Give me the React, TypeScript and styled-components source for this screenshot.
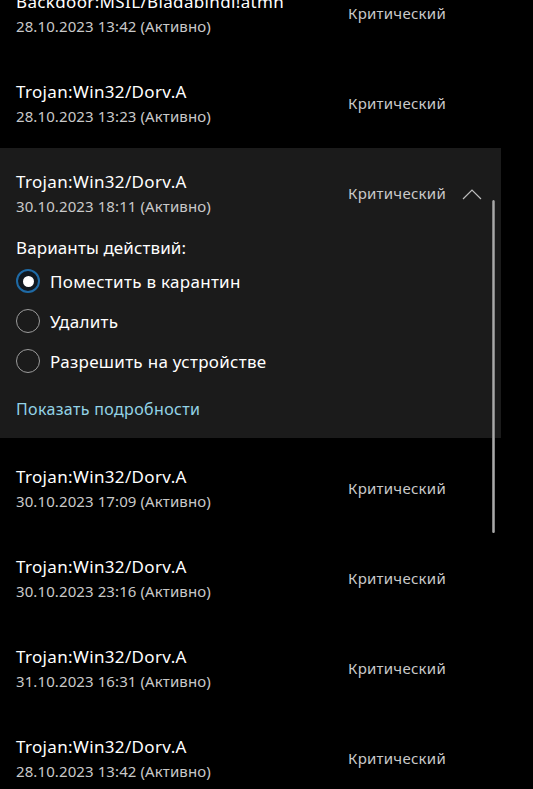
import React from "react";
import styled, { createGlobalStyle } from "styled-components";

const Global = createGlobalStyle`
  html, body { margin: 0; padding: 0; background: #000; }
  body { font-family: "Noto Sans", "Open Sans", sans-serif; overflow: hidden; }
`;

const Page = styled.div`
  position: relative;
  width: 533px;
  height: 789px;
  overflow: hidden;
  background: #000;
`;

const List = styled.div`
  display: flex;
  flex-direction: column;
  margin-top: -32px;
  width: 501px;
`;

const Row = styled.div`
  display: grid;
  grid-template-columns: 332px 114px 20px;
  align-items: center;
  height: 90px;
  padding-left: 16px;
  box-sizing: border-box;
`;

const Info = styled.div`
  display: flex;
  flex-direction: column;
`;

const Title = styled.div`
  color: #fff;
  font-size: 17px;
  line-height: 22px;
  letter-spacing: 0.35px;
  white-space: nowrap;
`;

const DateLine = styled.div`
  color: #c9c9c9;
  font-size: 15px;
  line-height: 20px;
  margin-top: 3px;
  letter-spacing: 0.1px;
  white-space: nowrap;
`;

const Severity = styled.div`
  color: #c9c9c9;
  font-size: 15px;
  line-height: 20px;
  letter-spacing: 0.25px;
  white-space: nowrap;
`;

const Panel = styled.div`
  background: #1b1b1b;
  margin-bottom: 5px;
`;

const Body = styled.div`
  padding: 0 16px 18px;
  display: flex;
  flex-direction: column;
`;

const Label = styled.div`
  color: #fff;
  font-size: 17px;
  line-height: 22px;
  margin-top: -1px;
  letter-spacing: 0.1px;
`;

const Options = styled.div`
  display: flex;
  flex-direction: column;
  margin-top: 2px;
`;

const OptionRow = styled.div`
  display: flex;
  align-items: center;
  height: 40px;
  gap: 10px;
  color: #fff;
  font-size: 17px;
  letter-spacing: 0.3px;
`;

const Radio = styled.span<{ $checked?: boolean }>`
  box-sizing: border-box;
  width: 24px;
  height: 24px;
  border-radius: 50%;
  flex: none;
  display: flex;
  align-items: center;
  justify-content: center;
  border: ${(p) => (p.$checked ? "2.5px solid #1f6aa5" : "1.5px solid #9b9b9b")};
  background: ${(p) => (p.$checked ? "#101820" : "transparent")};
  &::after {
    content: "";
    display: ${(p) => (p.$checked ? "block" : "none")};
    width: 11px;
    height: 11px;
    border-radius: 50%;
    background: #fff;
  }
`;

const Link = styled.div`
  color: #93d3e6;
  font-size: 16px;
  line-height: 22px;
  margin-top: 17px;
  letter-spacing: 0.35px;
`;

const Chevron = styled.svg`
  display: block;
  margin-top: 2px;
`;

const Scrollbar = styled.div`
  position: absolute;
  left: 492px;
  top: 200px;
  width: 3px;
  height: 333px;
  border-radius: 2px;
  background: linear-gradient(90deg, #6f6f6f, #a9a9a9 50%, #6f6f6f);
`;

type Item = { title: string; date: string };

const before: Item[] = [
  { title: "Backdoor:MSIL/Bladabindi!atmn", date: "28.10.2023 13:42 (Активно)" },
  { title: "Trojan:Win32/Dorv.A", date: "28.10.2023 13:23 (Активно)" },
];

const after: Item[] = [
  { title: "Trojan:Win32/Dorv.A", date: "30.10.2023 17:09 (Активно)" },
  { title: "Trojan:Win32/Dorv.A", date: "30.10.2023 23:16 (Активно)" },
  { title: "Trojan:Win32/Dorv.A", date: "31.10.2023 16:31 (Активно)" },
  { title: "Trojan:Win32/Dorv.A", date: "28.10.2023 13:42 (Активно)" },
];

const ThreatRow = ({ item }: { item: Item }) => (
  <Row>
    <Info>
      <Title>{item.title}</Title>
      <DateLine>{item.date}</DateLine>
    </Info>
    <Severity>Критический</Severity>
  </Row>
);

export default function App() {
  return (
    <Page>
      <Global />
      <List>
        {before.map((it, i) => (
          <ThreatRow key={"b" + i} item={it} />
        ))}
        <Panel>
          <Row>
            <Info>
              <Title>Trojan:Win32/Dorv.A</Title>
              <DateLine>30.10.2023 18:11 (Активно)</DateLine>
            </Info>
            <Severity>Критический</Severity>
            <Chevron width="20" height="12" viewBox="0 0 20 12">
              <path d="M1 11 L10 2 L19 11" fill="none" stroke="#bdbdbd" strokeWidth="1.2" />
            </Chevron>
          </Row>
          <Body>
            <Label>Варианты действий:</Label>
            <Options>
              <OptionRow>
                <Radio $checked />
                Поместить в карантин
              </OptionRow>
              <OptionRow>
                <Radio />
                Удалить
              </OptionRow>
              <OptionRow>
                <Radio />
                Разрешить на устройстве
              </OptionRow>
            </Options>
            <Link>Показать подробности</Link>
          </Body>
        </Panel>
        {after.map((it, i) => (
          <ThreatRow key={"a" + i} item={it} />
        ))}
      </List>
      <Scrollbar />
    </Page>
  );
}
